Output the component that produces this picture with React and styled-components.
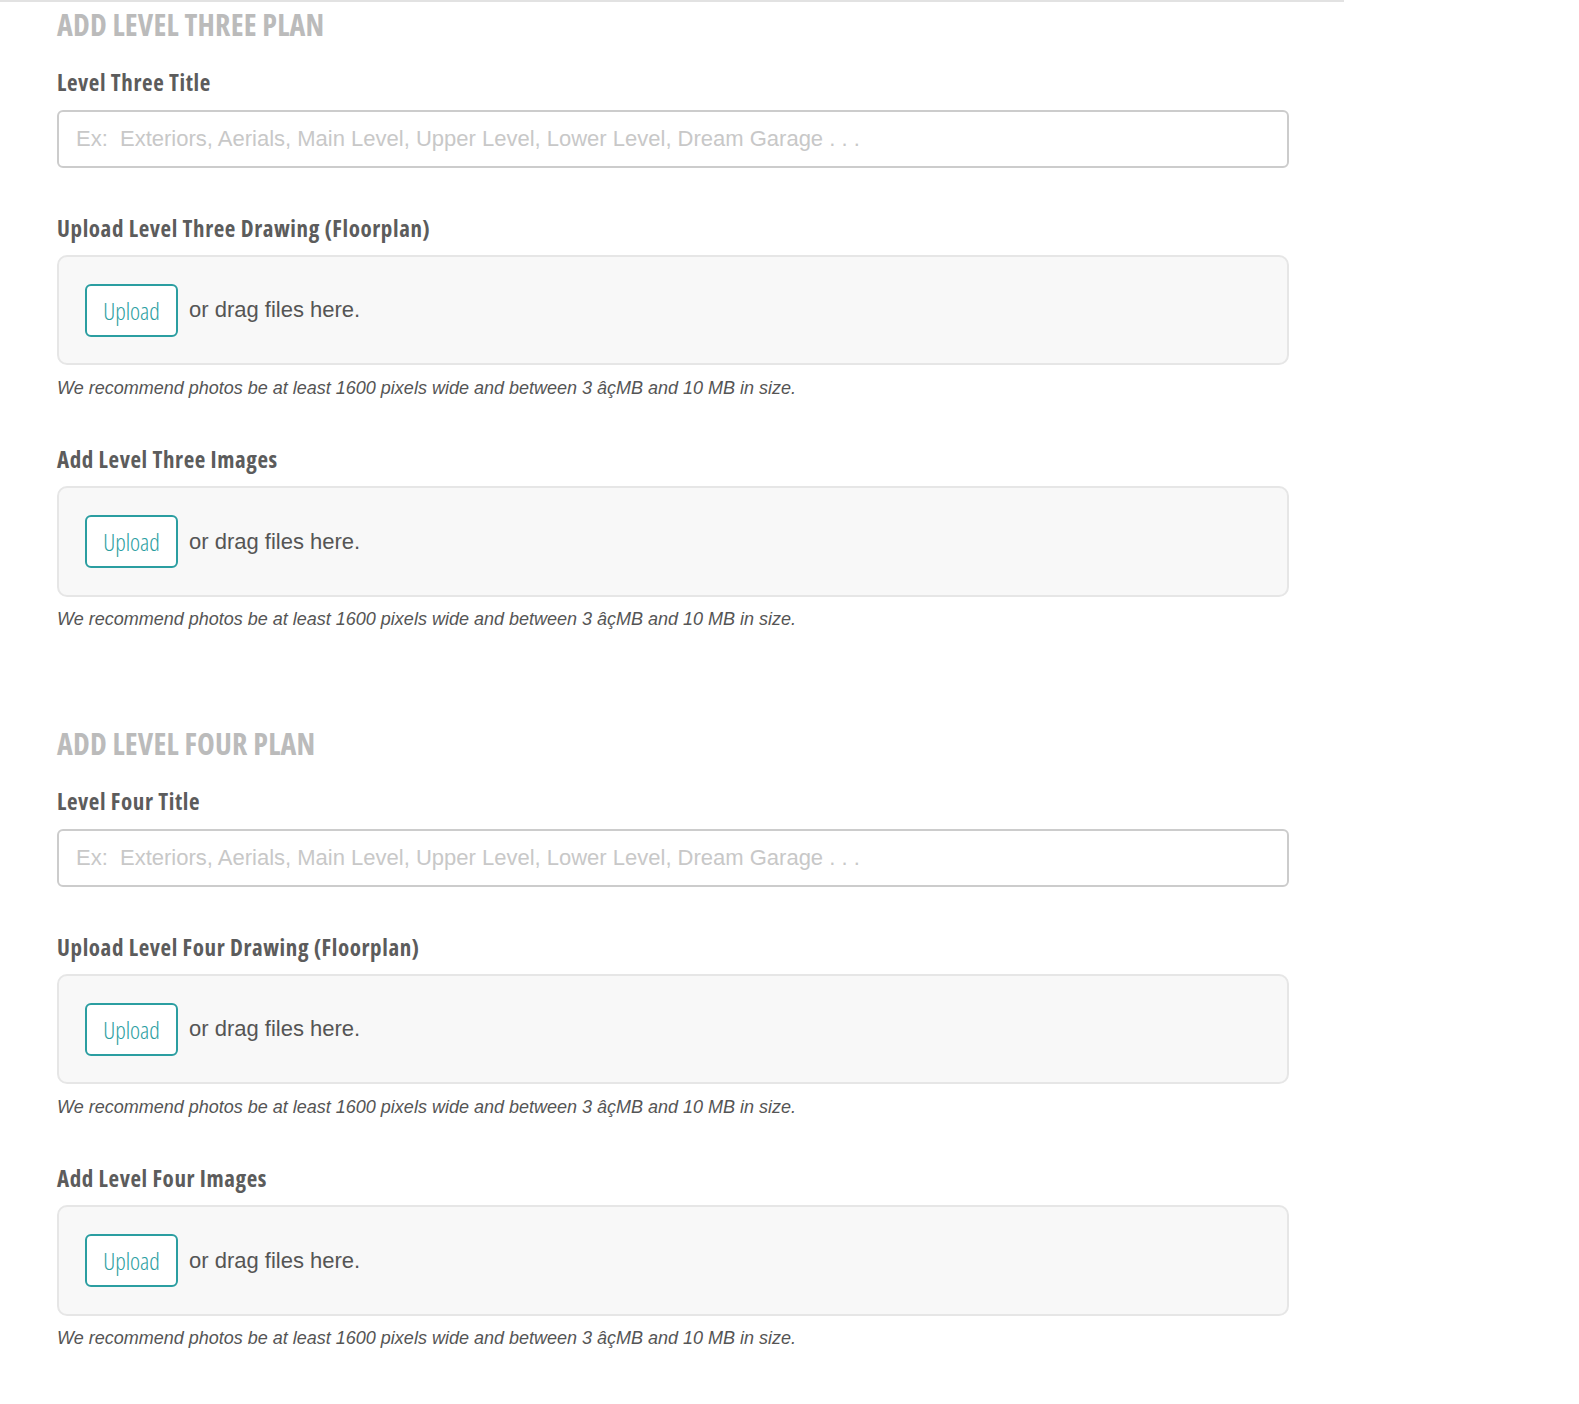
import React from 'react'
import styled, { createGlobalStyle } from 'styled-components'

const GlobalStyle = createGlobalStyle`
  html, body {
    margin: 0;
    padding: 0;
    background: #ffffff;
  }
`

const Page = styled.div`
  width: 1579px;
  min-height: 1404px;
  background: #fff;
`

const TopRule = styled.div`
  width: 1344px;
  height: 2px;
  background: #e2e2e2;
`

const Form = styled.div`
  width: 1232px;
  padding: 3px 0 0 57px;
`

const Section = styled.section`
  margin-bottom: 94px;
`

const Heading = styled.h2`
  margin: 0;
  font-family: "Open Sans", sans-serif;
  font-stretch: 75%;
  font-weight: 700;
  font-size: 30px;
  line-height: 40px;
  letter-spacing: 0.2px;
  color: #bbbbbb;
  text-transform: uppercase;
`

const Field = styled.div`
  margin-top: ${p => p.$gap || 45}px;
`

const Label = styled.label`
  display: block;
  font-family: "Open Sans", sans-serif;
  font-stretch: 75%;
  font-weight: 700;
  font-size: 23px;
  line-height: 30px;
  letter-spacing: 0.6px;
  color: #5c5c5c;
`

const Input = styled.input`
  display: block;
  box-sizing: border-box;
  width: 100%;
  height: 58px;
  margin-top: 13px;
  padding: 0 17px;
  border: 2px solid #cccccc;
  border-radius: 6px;
  background: #fff;
  font-family: "Liberation Sans", Arial, sans-serif;
  font-size: 22px;
  color: #555;
  outline: none;

  &::placeholder {
    color: #c8c8c8;
  }
`

const DropZone = styled.div`
  box-sizing: border-box;
  display: flex;
  align-items: center;
  gap: 11px;
  width: 100%;
  height: ${p => p.$height || 110}px;
  margin-top: 12px;
  padding: 0 26px;
  background: #f8f8f8;
  border: 2px solid #e6e6e6;
  border-radius: 10px;
`

const UploadButton = styled.button`
  box-sizing: border-box;
  width: 93px;
  height: 53px;
  padding: 0;
  background: #fff;
  border: 2px solid #2b9ea1;
  border-radius: 6px;
  font-family: "Open Sans", sans-serif;
  font-stretch: 75%;
  font-weight: 300;
  font-size: 24px;
  color: #2b9ea1;
  cursor: pointer;
`

const DragText = styled.span`
  font-family: "Liberation Sans", Arial, sans-serif;
  font-size: 22px;
  color: #555;
`

const Note = styled.p`
  margin: ${p => p.$gap || 12}px 0 0;
  font-family: "Liberation Sans", Arial, sans-serif;
  font-style: italic;
  font-size: 18px;
  line-height: 22px;
  color: #555;
`

const NOTE = 'We recommend photos be at least 1600 pixels wide and between 3 âçMB and 10 MB in size.'
const PLACEHOLDER = 'Ex:  Exteriors, Aerials, Main Level, Upper Level, Lower Level, Dream Garage . . .'

function Upload({ height, noteGap }) {
  return (
    <>
      <DropZone $height={height}>
        <UploadButton>Upload</UploadButton>
        <DragText>or drag files here.</DragText>
      </DropZone>
      <Note $gap={noteGap}>{NOTE}</Note>
    </>
  )
}

function LevelPlan({ level }) {
  return (
    <Section>
      <Heading>Add Level {level} Plan</Heading>

      <Field $gap={22}>
        <Label>Level {level} Title</Label>
        <Input placeholder={PLACEHOLDER} />
      </Field>

      <Field>
        <Label>Upload Level {level} Drawing (Floorplan)</Label>
        <Upload height={110} />
      </Field>

      <Field>
        <Label>Add Level {level} Images</Label>
        <Upload height={111} noteGap={11} />
      </Field>
    </Section>
  )
}

export default function App() {
  return (
    <Page>
      <GlobalStyle />
      <TopRule />
      <Form>
        <LevelPlan level="Three" />
        <LevelPlan level="Four" />
      </Form>
    </Page>
  )
}
